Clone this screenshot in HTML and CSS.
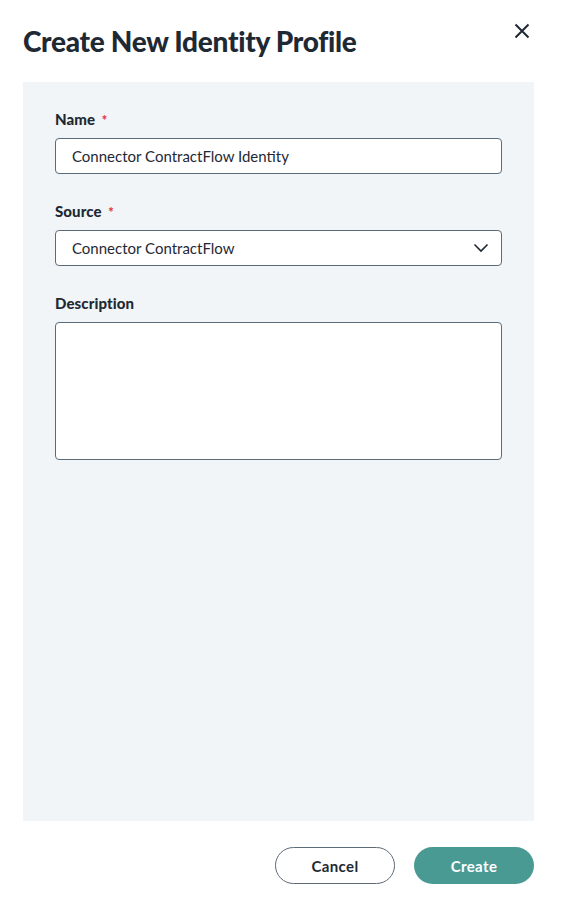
FILE: index.html
```html
<!DOCTYPE html>
<html>
<head>
<meta charset="utf-8">
<link rel="stylesheet" href="styles.css">
</head>
<body>
<div class="dialog">
  <header class="header">
    <h1 class="title">Create New Identity Profile</h1>
    <button class="close" aria-label="Close">
      <svg width="16" height="16" viewBox="0 0 16 16"><path d="M1.5 1.5 L14.5 14.5 M14.5 1.5 L1.5 14.5" stroke="#1f2933" stroke-width="2" fill="none"/></svg>
    </button>
  </header>
  <main class="panel">
    <div class="field">
      <label class="label">Name <span class="req">*</span></label>
      <div class="input">Connector ContractFlow Identity</div>
    </div>
    <div class="field">
      <label class="label">Source <span class="req">*</span></label>
      <div class="input select">
        <span>Connector ContractFlow</span>
        <svg width="16" height="10" viewBox="0 0 16 10"><path d="M1.5 1.5 L8 8 L14.5 1.5" stroke="#1f2933" stroke-width="1.6" fill="none"/></svg>
      </div>
    </div>
    <div class="field">
      <label class="label">Description</label>
      <div class="textarea"></div>
    </div>
  </main>
  <footer class="footer">
    <button class="btn btn-cancel">Cancel</button>
    <button class="btn btn-create">Create</button>
  </footer>
</div>
</body>
</html>
```
FILE: styles.css
```css
* { box-sizing: border-box; }
html, body { margin: 0; padding: 0; background: #fff; }
body { font-family: Lato, "Open Sans", sans-serif; color: #1f2933; }
.dialog { width: 566px; height: 906px; padding: 0 32px 0 23px; display: flex; flex-direction: column; }
.header { display: flex; justify-content: space-between; align-items: flex-start; height: 82px; }
.title { margin: 24px 0 0 0; font-size: 28px; font-weight: 900; line-height: 34px; letter-spacing: -0.3px; }
.close { margin: 23px 4px 0 0; background: none; border: 0; padding: 0; width: 16px; height: 16px; cursor: pointer; display: block; }
.close svg { display: block; }
.panel { background: #f2f5f8; height: 739px; padding: 28px 32px 0 32px; display: flex; flex-direction: column; }
.field { display: flex; flex-direction: column; margin-bottom: 28px; }
.label { display: block; height: 18px; font-size: 15px; font-weight: 900; line-height: 18px; margin-bottom: 10px; color: #1f2933; letter-spacing: 0.1px; overflow: visible; }
.req { color: #e0324a; margin-left: 3px; font-size: 13px; line-height: 1; vertical-align: baseline; }
.input { height: 36px; background: #fff; border: 1px solid #5c6b7a; border-radius: 4px; padding: 0 16px; font-size: 15px; line-height: 34px; color: #1f2933; }
.select { display: flex; justify-content: space-between; align-items: center; padding-right: 12px; }
.textarea { height: 138px; background: #fff; border: 1px solid #5c6b7a; border-radius: 4px; }
.footer { display: flex; justify-content: flex-end; gap: 19px; padding-top: 26px; }
.btn { width: 120px; height: 37px; border-radius: 19px; font-family: Lato, sans-serif; font-size: 15px; font-weight: 700; letter-spacing: 0.4px; cursor: pointer; }
.btn-cancel { background: #fff; border: 1px solid #5c6b7a; color: #1f2933; }
.btn-create { background: #4a9a94; border: 0; color: #fff; }
```
